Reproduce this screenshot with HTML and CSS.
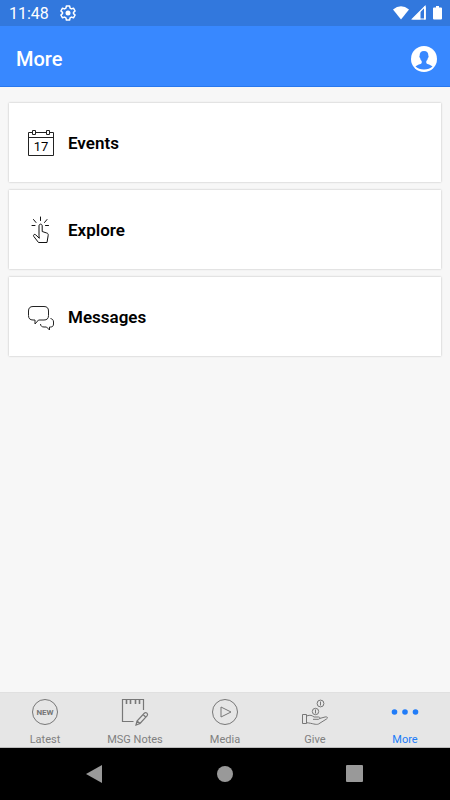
FILE: index.html
```html
<!DOCTYPE html>
<html lang="en">
<head>
<meta charset="UTF-8">
<meta name="viewport" content="width=device-width, initial-scale=1.0">
<title>More</title>
<link rel="stylesheet" href="styles.css">
</head>
<body>
<div class="status-bar">
  <span class="time">11:48</span>
  <svg class="gear" width="16" height="16" viewBox="0 0 16 16">
    <path d="M6.4 1h3.2l.5 2.1 1.3.8 2.1-.7 1.6 2.8-1.6 1.4v1.2l1.6 1.4-1.6 2.8-2.1-.7-1.3.8-.5 2.1H6.4l-.5-2.1-1.3-.8-2.1.7L.9 10l1.6-1.4V7.4L.9 6l1.6-2.8 2.1.7 1.3-.8z" fill="none" stroke="#fff" stroke-width="1.5" stroke-linejoin="round"/>
    <circle cx="8" cy="8" r="2.5" fill="#fff"/>
  </svg>
  <div class="status-icons">
    <svg width="18" height="16" viewBox="0 0 18 16"><path d="M1 4.5Q9-1.800 17 4.5L9 14.5z" fill="#fff"/></svg>
    <svg width="16" height="16" viewBox="0 0 16 16"><path d="M1.5 14 14 1.5V14z" fill="none" stroke="#fff" stroke-width="1.2"/><path d="M1 14.5 9.5 6v8.5zM13 1.5h1.800v13H13z" fill="#fff"/></svg>
    <svg class="battery" width="9" height="16" viewBox="0 0 9 16"><path d="M3 1h3v1.5h2q1 0 1 1v10q0 1-1 1H1q-1 0-1-1v-10q0-1 1-1h2z" fill="#fff"/></svg>
  </div>
</div>

<header class="header">
  <h1>More</h1>
  <button class="profile" type="button" aria-label="Profile">
    <svg width="26" height="26" viewBox="0 0 26 26">
      <circle cx="13" cy="13" r="13" fill="#fff"/>
      <path d="M13 5c-3 0-4.5 1.9-4.3 4.5-.5.3-.5 1.9.5 2.7.2 1.4.8 2.1 1.5 2.8v1.9c-.8 1.5-4.7 1.6-6.2 3.6C6.5 22.3 9.5 23.5 13 23.5s6.5-1.2 8.5-3c-1.5-2-5.4-2.1-6.2-3.6V15c.7-.7 1.3-1.4 1.5-2.8 1-.8 1-2.4.5-2.7C17.5 6.9 16 5 13 5z" fill="#3888ff"/>
    </svg>
  </button>
</header>

<main class="list">
  <a class="card" href="#events">
    <svg width="28" height="28" viewBox="0 0 28 28">
      <g fill="none" stroke="#222">
        <path d="M5 3.5H1.5v23h25v-23H23M9 3.5h10M1.5 8.5h25"/>
        <path d="M5.5 1.5h3v4h-3zM19.5 1.5h3v4h-3z"/>
      </g>
      <text class="day" x="14" y="22" text-anchor="middle">17</text>
    </svg>
    <span>Events</span>
  </a>
  <a class="card" href="#explore">
    <svg width="28" height="28" viewBox="0 0 28 28" fill="none" stroke="#111" stroke-linejoin="round" stroke-linecap="round">
      <path d="M13.5 1v3.5M6.5 3.5l2.5 3M20 3.5l-2.5 3M5 9.5h3M18.5 9.5h3"/>
      <path d="M12 19.5V10c0-2.5 3.2-2.5 3.2 0v5.5l4.5 1.5c1.3.4 1.7 1 1.5 2.3L20 26.5h-8.5l-4.8-6.2c-.8-1.3.8-2.6 2-1.5l3.3 3.2z"/>
    </svg>
    <span>Explore</span>
  </a>
  <a class="card" href="#messages">
    <svg width="28" height="28" viewBox="0 0 28 28" fill="none" stroke="#222" stroke-linejoin="round">
      <path d="M6 3.5h11c3 0 4.5 1.5 4.5 4.5v4.5c0 3-1.5 4.5-4.5 4.5h-5.5L8 21v-4H6c-3 0-4.5-1.5-4.5-4.5V8c0-3 1.5-4.5 4.5-4.5z"/>
      <path d="M23.5 15.5c2 .5 3 1.5 3 3.5v2c0 2-1 3-3 3h-1v3l-3-3h-2.5c-2 0-3.5-1-3.5-3"/>
    </svg>
    <span>Messages</span>
  </a>
</main>

<nav class="tabs">
  <a class="tab" href="#latest">
    <svg width="28" height="28" viewBox="0 0 28 28">
      <circle cx="14" cy="14" r="12.5" fill="none" stroke="#777"/>
      <text class="new" x="14" y="17" text-anchor="middle">NEW</text>
    </svg>
    <span>Latest</span>
  </a>
  <a class="tab" href="#notes">
    <svg width="28" height="28" viewBox="0 0 28 28" fill="none" stroke="#777">
      <path d="M12.5 23.5h-11v-22h21V12" stroke-width="1.2"/>
      <path d="M5.5 2v4M9.5 2v4M14.5 2v4M18.5 2v4" stroke-width="1.6"/>
      <path d="m15 27 1-4 7.5-8c1.5-1.3 4 .8 2.7 2.7L19 25.5zM16 23l3 2.5M22 16.5l3 2.7" stroke-width="1.2"/>
    </svg>
    <span>MSG Notes</span>
  </a>
  <a class="tab" href="#media">
    <svg width="28" height="28" viewBox="0 0 28 28" fill="none" stroke="#777">
      <circle cx="14" cy="14" r="12.5"/>
      <path d="M10 9v10l10-5z"/>
    </svg>
    <span>Media</span>
  </a>
  <a class="tab" href="#give">
    <svg width="28" height="28" viewBox="0 0 28 28" fill="none" stroke="#777" stroke-linejoin="round">
      <circle cx="19.5" cy="5.5" r="3.4"/><path d="M19.5 3.5v4"/>
      <circle cx="14.5" cy="13.5" r="3.2"/><path d="M14.5 11.5v4"/>
      <path d="M1.5 16.5h4v9h-4zM5.5 18c4-1.5 5.5-.5 7.5 1h4.5c2 0 1.5 2.3 0 2.3H12M18.5 20.5l5.5-1.5c2.3-.5 3.4.8 1.5 2L17.5 26c-2.5 1.2-6-.8-12-1.3"/>
    </svg>
    <span>Give</span>
  </a>
  <a class="tab active" href="#more" aria-current="page">
    <svg width="28" height="28" viewBox="0 0 28 28" fill="#207cf8">
      <circle cx="3.5" cy="14" r="2.8"/><circle cx="14" cy="14" r="2.8"/><circle cx="24.5" cy="14" r="2.8"/>
    </svg>
    <span>More</span>
  </a>
</nav>

<div class="system-nav">
  <button type="button" aria-label="Back"><svg width="18" height="18" viewBox="0 0 18 18"><path d="M0 9 16 0v18z"/></svg></button>
  <button type="button" aria-label="Home"><svg width="18" height="18" viewBox="0 0 18 18"><circle cx="9" cy="9" r="8"/></svg></button>
  <button type="button" aria-label="Recent apps"><svg width="18" height="18" viewBox="0 0 18 18"><rect width="17" height="17" rx="1"/></svg></button>
</div>
</body>
</html>
```

FILE: styles.css
```css
* {
  box-sizing: border-box;
}
body {
  display: flex;
  flex-direction: column;
  min-height: 100vh;
  margin: 0;
  background: #f7f7f7;
  font-family: Roboto, sans-serif;
}
svg {
  display: block;
}
button {
  padding: 0;
  border: 0;
  background: none;
}
.status-bar {
  display: flex;
  align-items: center;
  height: 26px;
  padding: 0 8px 0 9px;
  background: #3278dd;
  color: #fff;
}
.time {
  font-size: 16px;
}
.gear {
  margin-left: 11px;
}
.status-icons {
  display: flex;
  gap: 1px;
  margin-left: auto;
}
.battery {
  margin-left: 5px;
}
.header {
  display: flex;
  align-items: center;
  justify-content: space-between;
  height: 61px;
  padding: 5px 13px 0 16px;
  background: #3888ff;
  border-bottom: 1px solid #2878ee;
  color: #fff;
}
.header h1 {
  margin: 0;
  font-size: 20px;
  font-weight: 500;
}
.list {
  display: flex;
  flex: 1;
  flex-direction: column;
  gap: 8px;
  padding: 16px 9px;
}
.card {
  display: flex;
  align-items: center;
  gap: 13px;
  height: 79px;
  padding: 0 18px;
  background: #fff;
  box-shadow: 0 0 2px rgba(0, 0, 0, 0.25);
  color: #000;
  font-size: 17px;
  font-weight: 600;
  text-decoration: none;
}
.day {
  fill: #000;
  font-size: 13px;
  font-weight: 400;
}
.tabs {
  display: grid;
  grid-template-columns: repeat(5, 1fr);
  height: 56px;
  background: #e6e6e6;
  border-top: 1px solid #e0e0e0;
  border-bottom: 1px solid #bbb;
}
.tab {
  display: flex;
  flex-direction: column;
  align-items: center;
  gap: 7px;
  padding-top: 5px;
  color: #808080;
  font-size: 11px;
  line-height: 14px;
  text-decoration: none;
}
.tab.active {
  color: #207cf8;
}
.new {
  fill: #777;
  font-size: 8px;
  font-weight: 700;
}
.system-nav {
  display: grid;
  grid-template-columns: repeat(3, 1fr);
  height: 52px;
  padding: 0 30px;
  background: #000;
}
.system-nav button {
  display: flex;
  align-items: center;
  justify-content: center;
}
.system-nav svg {
  fill: #999;
}
```
